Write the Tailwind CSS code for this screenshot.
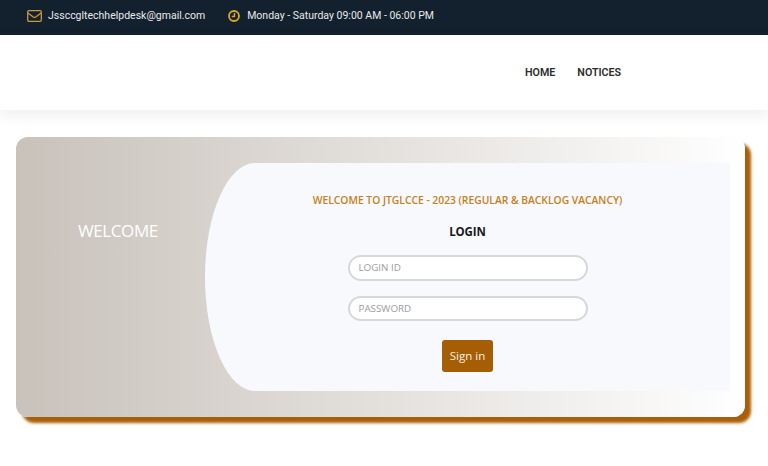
<!doctype html>
<html lang="en">
  <head>
    <meta charset="UTF-8" />
    <title>Login</title>
    <meta name="viewport" content="width=device-width, initial-scale=1.0" />
    <script src="https://cdn.jsdelivr.net/npm/@tailwindcss/browser@4"></script>
  </head>
  <body class="bg-white h-[466px] overflow-hidden font-['Open_Sans',sans-serif]">
    <div class="bg-[#13202d] h-[35px] pl-[27px] pb-[3px] flex items-center gap-[23px] text-[10.5px] text-[#e8eaec] font-['Roboto',sans-serif]">
      <div class="flex items-center gap-[6px]">
        <svg width="15" height="12" viewBox="0 0 15 12" fill="none" stroke="#c79a3c" stroke-width="1.3" stroke-linejoin="round">
          <rect x="0.7" y="0.7" width="13.6" height="10.6" rx="1.2" />
          <path d="M0.9 3 L6.3 7 Q7.5 7.8 8.7 7 L14.1 3" />
        </svg>
        <span>Jssccgltechhelpdesk@gmail.com</span>
      </div>
      <div class="flex items-center gap-[7px]">
        <svg width="12" height="12" viewBox="0 0 13 13" fill="none" stroke="#dba726" stroke-width="2">
          <circle cx="6.5" cy="6.5" r="5.4" />
          <path d="M7 3.2 V7 H4" stroke-width="1.6" />
        </svg>
        <span>Monday - Saturday 09:00 AM - 06:00 PM</span>
      </div>
    </div>

    <nav class="h-[75px] bg-white shadow-[0_4px_14px_rgba(40,50,90,0.09)] flex items-center gap-[22px] pl-[525px] pt-[2px] text-[10.7px] font-semibold text-[#2b2b2b] font-['Roboto',sans-serif]">
      <a>HOME</a>
      <a>NOTICES</a>
    </nav>

    <div class="mt-[27px] ml-[16px] w-[729px] h-[280px] rounded-[12px] bg-gradient-to-r from-[#c9c2bb] to-white shadow-[6px_6px_3px_#a85f08] flex py-[26px] pr-[15px]">
      <div class="w-[189px] shrink-0 pt-[56px] pl-[62px] text-[17px] leading-[24px] tracking-[-0.4px] text-white">WELCOME</div>
      <div class="flex-1 bg-[#f7f9fc] rounded-[50px_0_0_50px/114px_0_0_114px] flex flex-col items-center pt-[30px]">
        <div class="text-[10.3px] leading-[14px] font-semibold text-[#c57f20]">WELCOME TO JTGLCCE - 2023 (REGULAR &amp; BACKLOG VACANCY)</div>
        <div class="mt-[17px] text-[11.5px] leading-[16px] font-bold tracking-[-0.1px] text-[#15181c]">LOGIN</div>
        <input type="text" placeholder="LOGIN ID" class="mt-[15px] w-[240px] h-[25.5px] px-[9px] bg-white border-2 border-[#d6d8db] rounded-full text-[9.8px] placeholder:text-[#9a9da1]" />
        <input type="password" placeholder="PASSWORD" class="mt-[15px] w-[240px] h-[25.5px] px-[9px] bg-white border-2 border-[#d6d8db] rounded-full text-[9.8px] placeholder:text-[#9a9da1]" />
        <button class="mt-[19px] w-[51px] h-[32px] bg-[#a65e05] text-[#f8efe2] rounded-[3px] text-[11.5px]">Sign in</button>
      </div>
    </div>
  </body>
</html>
